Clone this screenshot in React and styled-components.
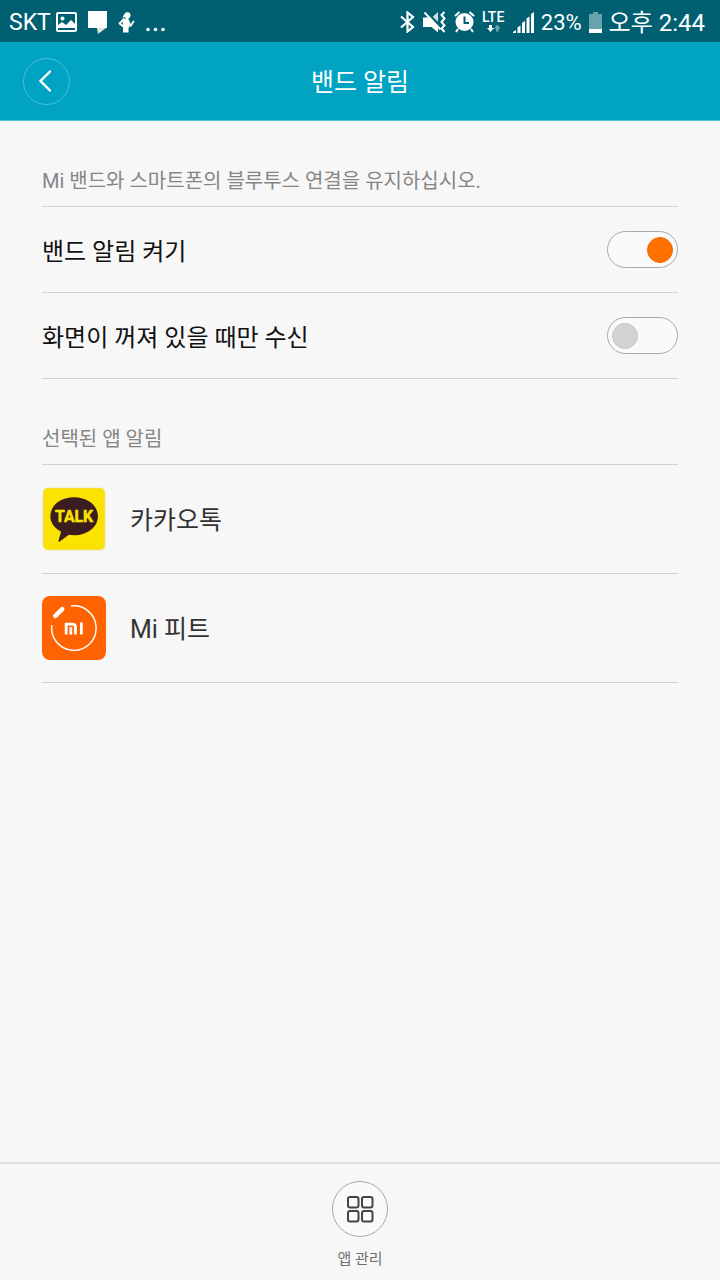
import React, { useState } from 'react';
import styled, { createGlobalStyle } from 'styled-components';

const GlobalStyle = createGlobalStyle`
  *, *::before, *::after { box-sizing: border-box; }
  body {
    margin: 0;
    background: #f7f7f7;
    font-family: Roboto, "Noto Sans CJK KR", sans-serif;
  }
  button { font: inherit; }
`;

const Screen = styled.div`
  display: flex;
  flex-direction: column;
  min-height: 100vh;
  background: #f7f7f7;
`;

const StatusBar = styled.div`
  display: flex;
  align-items: center;
  justify-content: space-between;
  height: 42px;
  padding: 2px 15px 0 9px;
  background: #006072;
  color: #fff;
  line-height: 32px;
  white-space: nowrap;
`;

const StatusGroup = styled.div`
  display: flex;
  align-items: center;
  gap: ${(p) => p.$gap}px;
`;

const StatusText = styled.span`
  padding-top: 2px;
  font-size: ${(p) => p.$size}px;
`;

const Glyph = styled.svg`
  display: block;
  flex: none;
`;

const Header = styled.header`
  display: grid;
  grid-template-columns: 48px 1fr 48px;
  align-items: center;
  height: 79px;
  padding: 0 23px;
  background: #00a4c2;
  border-bottom: 1px solid #4fbdd2;
`;

const BackButton = styled.button`
  display: grid;
  place-items: center;
  width: 47px;
  height: 47px;
  padding: 0;
  border: 1px solid #4dbfd3;
  border-radius: 50%;
  background: none;
  color: #fff;
`;

const Title = styled.h1`
  margin: 0;
  padding-top: 4px;
  text-align: center;
  font-size: 25px;
  line-height: 36px;
  font-weight: 400;
  color: #fff;
`;

const Main = styled.main`
  flex: 1;
  padding: 0 42px;
`;

const Caption = styled.h2`
  display: flex;
  align-items: flex-end;
  height: 86px;
  margin: 0;
  padding-bottom: 10px;
  border-bottom: 1px solid #d0d0d0;
  font-size: 20px;
  line-height: 30px;
  font-weight: 400;
  color: #858585;
`;

const SettingRow = styled.label`
  display: flex;
  align-items: center;
  justify-content: space-between;
  height: 86px;
  border-bottom: 1px solid #d0d0d0;
  font-size: 24px;
  line-height: 36px;
  color: #111;
`;

const RowText = styled.span`
  padding-top: 4px;
`;

const Switch = styled.input`
  appearance: none;
  display: flex;
  align-items: center;
  justify-content: flex-start;
  flex: none;
  width: 71px;
  height: 37px;
  margin: 0;
  padding: 0 4px;
  border: 1px solid #a9a9a9;
  border-radius: 19px;
  background: #fafafa;

  &::before {
    content: "";
    width: 26px;
    height: 26px;
    border: 1px solid #c4c4c4;
    border-radius: 50%;
    background: #d3d3d3;
  }
  &:checked { justify-content: flex-end; }
  &:checked::before {
    border-color: #f26a05;
    background: #ff7200;
  }
`;

const AppList = styled.ul`
  margin: 0;
  padding: 0;
  list-style: none;
`;

const AppRow = styled.li`
  display: flex;
  align-items: center;
  gap: 24px;
  height: 109px;
  border-bottom: 1px solid #d0d0d0;
  font-size: 25px;
  line-height: 36px;
  color: #333;
`;

const Footer = styled.footer`
  display: flex;
  justify-content: center;
  height: 118px;
  padding-top: 17px;
  border-top: 2px solid #dedede;
`;

const FooterButton = styled.button`
  display: flex;
  flex-direction: column;
  align-items: center;
  gap: 10px;
  padding: 0;
  border: 0;
  background: none;
  font-size: 15px;
  line-height: 24px;
  color: #707070;
`;

const RoundIcon = styled.span`
  display: grid;
  place-items: center;
  width: 56px;
  height: 56px;
  border: 1px solid #a8a8a8;
  border-radius: 50%;
  background: #fafafa;
`;

const PictureIcon = () => (
  <Glyph width="21" height="20" viewBox="0 0 21 20">
    <rect x="1" y="1" width="19" height="18" rx="1" fill="none" stroke="#fff" strokeWidth="2" />
    <circle cx="6.5" cy="6.5" r="2" fill="#fff" />
    <path d="M2 16v-3l4-3 4 3 5-5 4 4v4z" fill="#fff" />
  </Glyph>
);

const NoteIcon = () => (
  <Glyph width="19" height="23" viewBox="0 0 19 23">
    <path d="M0 0h19v17H0z" fill="#fff" />
    <path d="M9 17h9l-8 6z" fill="#dfe6d8" />
  </Glyph>
);

const RunnerIcon = () => (
  <Glyph width="17" height="21" viewBox="0 0 17 21">
    <circle cx="9.500" cy="3.200" r="3" fill="#fff" />
    <path d="M9 .5L6 2.500 4.500 5.200 9 5zM8 5h2.500v2H8z" fill="#fff" />
    <path d="M4.500 6.500h6.200v4l.8 3.500-1 2.500v4H5v-4.500z" fill="#fff" />
    <path d="M5.500 7.500L1.500 11.500 5.500 14.500M10.500 9l2 5 3-4.500" fill="none" stroke="#fff" strokeWidth="1.800" strokeLinecap="round" strokeLinejoin="round" />
  </Glyph>
);

const MoreIcon = () => (
  <Glyph width="19" height="20" viewBox="0 0 19 20" fill="#fff">
    <circle cx="2" cy="17.500" r="1.800" />
    <circle cx="9.500" cy="17.500" r="1.800" />
    <circle cx="17" cy="17.500" r="1.800" />
  </Glyph>
);

const BluetoothIcon = () => (
  <Glyph width="16" height="22" viewBox="0 0 16 22">
    <path d="M1 5.500l12 10.500-5.500 4.500v-19L13 6 1 16.500" fill="none" stroke="#fff" strokeWidth="2.200" />
  </Glyph>
);

const MutedIcon = () => (
  <Glyph width="24" height="22" viewBox="0 0 24 22">
    <path d="M0 6.500h5.500L15 16v5.500L8.500 16H0z" fill="#fff" />
    <path d="M15 1v10L9.800 5.800z" fill="#cfe0e3" />
    <path d="M1.500 1.500l16 17" stroke="#fff" strokeWidth="2" />
    <path d="M21.500 1L18.500 4l3 3.500-3 3.500 3 3.500-3 3 3 3.500" fill="none" stroke="#fff" strokeWidth="2" />
  </Glyph>
);

const AlarmIcon = () => (
  <Glyph width="21" height="22" viewBox="0 0 21 22">
    <circle cx="10.500" cy="11" r="9" fill="#fff" />
    <path d="M1 5l4.500-4M20 5l-4.500-4M4 18l-2 3M17 18l2 3" stroke="#fff" strokeWidth="2" />
    <path d="M10.500 5.500V12H15" fill="none" stroke="#006072" strokeWidth="2" />
  </Glyph>
);

const LteIcon = () => (
  <Glyph width="24" height="30" viewBox="0 -4 24 30" role="img" aria-label="LTE">
    <text x="0" y="11" fontSize="14" fontWeight="500" fontFamily="Roboto, sans-serif" fill="#fff">LTE</text>
    <path d="M7 14h3v3h2l-3.500 4L5 17h2z" fill="#fff" />
    <path d="M14 20.500v-3h-2l3.300-4 3.300 4h-2v3z" fill="#69a1ac" />
  </Glyph>
);

const SignalIcon = () => (
  <Glyph width="21" height="21" viewBox="0 0 21 21" fill="#fff">
    <path d="M0 20l3-2v3H0zM4.500 15.500l3-2V21h-3zM9 11l3-2v12H9zM13.500 6.500l3-2V21h-3zM18 2l3-2v21h-3z" />
  </Glyph>
);

const BatteryIcon = () => (
  <Glyph width="13" height="21" viewBox="0 0 13 21">
    <path d="M4 0h5v2h4v15H0V2h4z" fill="#69a1ac" />
    <path d="M0 17h13v4H0z" fill="#fff" />
  </Glyph>
);

const TalkLogo = () => (
  <Glyph width="64" height="64" viewBox="0 0 65 65">
    <rect x="1" y="1" width="63" height="63" rx="5" fill="#fae300" stroke="#e5dfa0" strokeWidth="0.600" />
    <path d="M32.500 10.500c13.600 0 24.300 8.300 24.300 19.200S46.100 49 32.500 49c-1.800 0-3.500-.1-5.200-.4L18 55.300c-.9.500-1.500.1-1.200-.9l2.600-9C12.700 42 8.500 36.300 8.500 29.700c0-10.900 10.400-19.200 24-19.200z" fill="#3b1c1f" />
    <text x="32.500" y="36" textAnchor="middle" fontFamily="Roboto, sans-serif" fontWeight="700" fontSize="16" fill="#fae300" stroke="#fae300" strokeWidth="0.500" strokeLinejoin="round">TALK</text>
  </Glyph>
);

const MiFitLogo = () => (
  <Glyph width="64" height="64" viewBox="0 0 65 65" fill="none" stroke="#fff">
    <rect width="65" height="65" rx="8" fill="#ff6200" stroke="none" />
    <path d="M29.500 10.200A22.600 22.600 0 1 1 10 29.500" strokeWidth="1.500" />
    <path d="M13.500 20.300l7-7" strokeWidth="4.600" strokeLinecap="round" />
    <path d="M24.500 39V28.500H31q3 0 3 3V39M29.300 31.500V39M40 27v12" strokeWidth="2.800" />
  </Glyph>
);

const apps = [
  { name: '카카오톡', Logo: TalkLogo },
  { name: 'Mi 피트', Logo: MiFitLogo },
];

export default function App() {
  const [enabled, setEnabled] = useState(true);
  const [screenOffOnly, setScreenOffOnly] = useState(false);

  return (
    <Screen>
      <GlobalStyle />
      <StatusBar>
        <StatusGroup $gap={11}>
          <StatusGroup $gap={5}>
            <StatusText $size={23}>SKT</StatusText>
            <PictureIcon />
          </StatusGroup>
          <NoteIcon />
          <RunnerIcon />
          <MoreIcon />
        </StatusGroup>
        <StatusGroup $gap={7}>
          <BluetoothIcon />
          <MutedIcon />
          <AlarmIcon />
          <LteIcon />
          <SignalIcon />
          <StatusText $size={22}>23%</StatusText>
          <BatteryIcon />
          <StatusText $size={24}>오후 2:44</StatusText>
        </StatusGroup>
      </StatusBar>

      <Header>
        <BackButton type="button" aria-label="뒤로">
          <Glyph width="17" height="24" viewBox="0 0 17 24">
            <path d="M12 2.500L2.500 12l9.500 9.500" fill="none" stroke="#fff" strokeWidth="2.400" strokeLinecap="round" />
          </Glyph>
        </BackButton>
        <Title>밴드 알림</Title>
      </Header>

      <Main>
        <Caption>Mi 밴드와 스마트폰의 블루투스 연결을 유지하십시오.</Caption>
        <SettingRow>
          <RowText>밴드 알림 켜기</RowText>
          <Switch type="checkbox" role="switch" checked={enabled} onChange={(e) => setEnabled(e.target.checked)} />
        </SettingRow>
        <SettingRow>
          <RowText>화면이 꺼져 있을 때만 수신</RowText>
          <Switch type="checkbox" role="switch" checked={screenOffOnly} onChange={(e) => setScreenOffOnly(e.target.checked)} />
        </SettingRow>
        <Caption>선택된 앱 알림</Caption>
        <AppList>
          {apps.map(({ name, Logo }) => (
            <AppRow key={name}>
              <Logo />
              <RowText>{name}</RowText>
            </AppRow>
          ))}
        </AppList>
      </Main>

      <Footer>
        <FooterButton type="button">
          <RoundIcon>
            <Glyph width="28" height="28" viewBox="0 0 28 28" fill="none" stroke="#444" strokeWidth="2">
              <rect x="2" y="2" width="10.500" height="10.500" rx="2" />
              <rect x="16" y="2" width="10.500" height="10.500" rx="2" />
              <rect x="2" y="16" width="10.500" height="10.500" rx="2" />
              <rect x="16" y="16" width="10.500" height="10.500" rx="2" />
            </Glyph>
          </RoundIcon>
          앱 관리
        </FooterButton>
      </Footer>
    </Screen>
  );
}
